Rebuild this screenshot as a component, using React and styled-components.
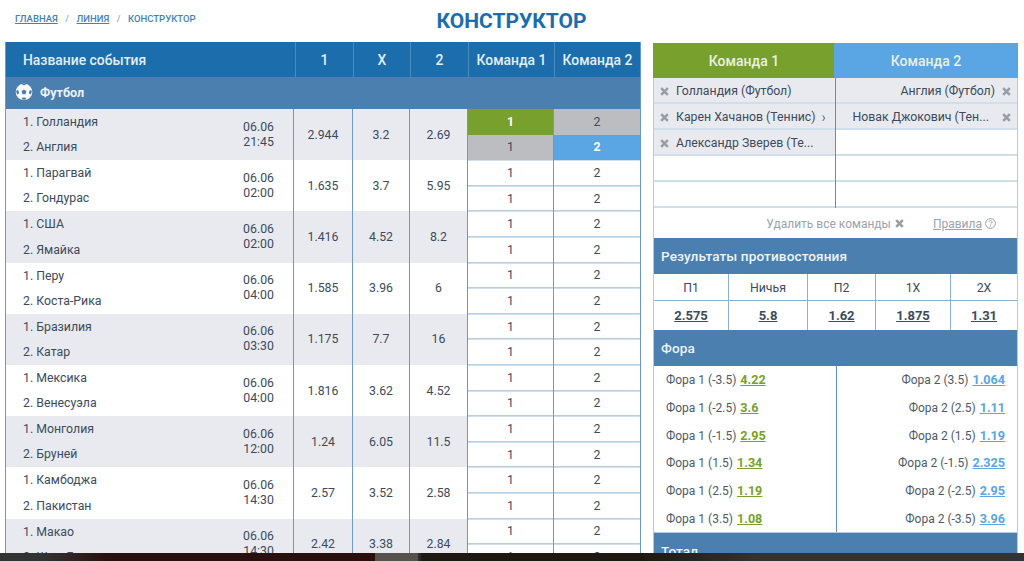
import React from "react";
import styled, { createGlobalStyle } from "styled-components";

const Global = createGlobalStyle`
  html, body { margin: 0; padding: 0; background: #fff; height: 100%; overflow: hidden; }
  body { font-family: Roboto, "Liberation Sans", sans-serif; color: #3c4a5c; font-size: 12.3px; }
  * { box-sizing: border-box; }
`;
const Page = styled.div`height: 561px; overflow: hidden; position: relative; padding: 0 6px 0 5px;`;
const Top = styled.header`height: 42px; position: relative; display: flex; justify-content: center;`;
const Crumbs = styled.nav`
  position: absolute; left: 10px; top: 13px; display: flex; gap: 7.5px;
  font-size: 9.5px; font-weight: 500; line-height: 12px;
`;
const Crumb = styled.span`text-decoration: ${p => (p.$link ? "underline" : "none")}; color: ${p => (p.$sep ? "#8aa8c4" : "#3f82b8")};`;
const Title = styled.h1`margin: 9px 0 0; font-size: 21px; line-height: 25px; font-weight: 700; color: #1b6dac;`;
const Columns = styled.div`display: flex; gap: 12px; align-items: flex-start;`;
const Table = styled.div`width: 636px; flex: none; border-left: 1px solid #6b9bc5; border-right: 1px solid #6b9bc5;`;
const HeadRow = styled.div`display: grid; grid-template-columns: 289px 58px 57px 58px 86px 1fr; height: 35px; background: #1b6dac; color: #e3edf5; font-weight: 500; font-size: 13.9px;`;
const HeadCell = styled.div`
  display: flex; align-items: center; justify-content: ${p => (p.$left ? "flex-start" : "center")};
  padding-left: ${p => (p.$left ? "17px" : "0")};
  border-left: ${p => (p.$left ? "0" : "1px solid #4a8abd")};
`;
const Sport = styled.div`height: 32px; background: #4a7fb0; color: #eef3f8; display: flex; align-items: center; gap: 7px; padding: 0 0 2px 9px; font-weight: 700; font-size: 12.5px;`;
const Row = styled.div`display: grid; grid-template-columns: 287px 59px 57px 58px 86px 1fr; height: 51.2px; background: ${p => (p.$alt ? "#e9eaf0" : "#fff")};`;
const NameCell = styled.div`display: flex; justify-content: space-between; align-items: center; padding: 0 19px 0 17px;`;
const Names = styled.div`display: flex; flex-direction: column; gap: 7.2px; line-height: 18px;`;
const Time = styled.div`text-align: center; line-height: 15px;`;
const Odd = styled.div`display: flex; align-items: center; justify-content: center; border-left: 1px solid #6b9bc5;`;
const Pick = styled.div`display: grid; grid-template-rows: 1fr 1fr; border-left: 1px solid #6b9bc5;`;
const PickBtn = styled.div`
  display: flex; align-items: center; justify-content: center;
  background: ${p => p.$bg || "#fff"}; color: ${p => (p.$on ? "#fff" : "#3c4a5c")};
  font-weight: ${p => (p.$on ? 700 : 400)};
  border-bottom: 1px solid ${p => (p.$bg ? "transparent" : "#b9d0e4")};
  border-top: 1px solid ${p => (p.$bg ? "transparent" : "#cfdfec")};
`;
const Side = styled.aside`width: 365px; flex: none; margin-top: 1px; border-left: 1px solid #b4cbe0; border-right: 1px solid #b4cbe0;`;
const TeamsHead = styled.div`display: grid; grid-template-columns: 181px 1fr; height: 35px; margin: 0 -1px;`;
const TeamHead = styled.div`display: flex; align-items: center; justify-content: center; background: ${p => p.$c}; color: #e8f0e4; font-weight: 500; font-size: 14px; ${p => (p.$right ? "" : "width: 182px;")}`;
const TeamGrid = styled.div`display: grid; grid-template-columns: 181px 1fr;`;
const TeamCol = styled.div`border-left: ${p => (p.$right ? "1px solid #5f90bb" : "0")};`;
const TeamRow = styled.div`
  height: 26px; display: flex; align-items: center; gap: 7px; padding: 2px 6px 0;
  background: ${p => (p.$on ? "#e9eaf0" : "#fff")};
  border-bottom: 2px solid #cfdfec;
  justify-content: ${p => (p.$right ? "flex-end" : "flex-start")};
  white-space: nowrap;
`;
const CrossIcon = styled.svg`flex: none; color: #989da6;`;
const Cross = () => (
  <CrossIcon width="9" height="9" viewBox="0 0 9 9">
    <path d="M1.200 1.200l6.600 6.600M7.800 1.200L1.200 7.800" stroke="currentColor" strokeWidth="2.600" />
  </CrossIcon>
);
const Gt = styled.span`color: #6a7583; font-size: 14px; line-height: 1; margin-left: -1px;`;
const Tools = styled.div`height: 30px; display: flex; justify-content: flex-end; align-items: center; padding: 1px 21px 0 0; color: #9aa2ad; font-size: 12px;`;
const Remove = styled.span`margin-right: 29px; display: flex; gap: 4px; align-items: center;`;
const Rules = styled.span`display: flex; align-items: center; gap: 3px;`;
const RulesText = styled.span`text-decoration: underline;`;
const Section = styled.div`height: 36px; background: #4a7fb0; color: #eef3f8; display: flex; align-items: center; padding-left: 7px; font-weight: 500; font-size: 13.6px; letter-spacing: .1px;`;
const Results = styled.div`display: grid; grid-template-columns: 74px 79px 68px 75px 1fr;`;
const ResCell = styled.div`
  height: ${p => (p.$v ? "29px" : "27px")}; display: flex; align-items: center; justify-content: center;
  padding-top: ${p => (p.$v ? "0" : "1px")};
  border-left: ${p => (p.$first ? "0" : "1px solid #8bb0d0")};
  border-bottom: ${p => (p.$v ? "0" : "1px solid #8bb0d0")};
  font-weight: ${p => (p.$v ? 700 : 400)}; text-decoration: ${p => (p.$v ? "underline" : "none")};
  font-size: ${p => (p.$v ? "13px" : "12.3px")};
`;
const Fora = styled.div`display: grid; grid-template-columns: 182px 1fr; height: 167px; border-bottom: 1px solid #b4cbe0;`;
const ForaCol = styled.div`
  display: flex; flex-direction: column; justify-content: space-between; padding: 5px 12px 4px;
  align-items: ${p => (p.$right ? "flex-end" : "flex-start")};
  border-left: ${p => (p.$right ? "1px solid #5f90bb" : "0")};
`;
const ForaItem = styled.div`height: 18px; line-height: 18px; display: flex; gap: 4px; font-size: 12px; color: #4d5a69;`;
const ForaVal = styled.span`color: ${p => p.$c}; font-weight: 700; text-decoration: underline; font-size: 12.6px;`;
const Dock = styled.div`position: absolute; left: 0; right: 0; bottom: 0; height: 8px;
  background: linear-gradient(90deg, #333 0, #333 40px, #2a0f0f 110px, #2a0f0f 375px, #57504d 375px, #57504d 418px, #2a2a2a 418px, #2a2a2a 421px, #1f1712 421px, #1f1712 640px, #333 760px, #333 100%);`;
const Ball = () => (
  <svg width="18" height="18" viewBox="0 0 18 18">
    <circle cx="9" cy="9" r="8.300" fill="#fff" />
    <path d="M9 6.500l2.500 1.800-1 2.900h-3l-1-2.900zM6.800 1.300L9 2.600l2.200-1.300c-1.400-.4-3-.4-4.400 0zM1.300 7.500l1.900-.6.900 3-1.300 1.800C1.500 10.700 1.100 9.100 1.300 7.500zM16.700 7.500l-1.900-.6-.9 3 1.300 1.800c1.300-1 1.700-2.600 1.500-4.200zM7 16.500l.3-2h3.400l.3 2c-1.300.4-2.700.4-4 0z" fill="#4a7fb0" />
  </svg>
);
const Help = () => (
  <svg width="11" height="11" viewBox="0 0 11 11" fill="none" stroke="#9aa2ad" strokeWidth="1">
    <circle cx="5.500" cy="5.500" r="4.900" />
    <path d="M3.900 4.200c.1-1 .9-1.500 1.700-1.500s1.500.6 1.500 1.400c0 1.200-1.600 1.200-1.600 2.500M5.500 7.600v.9" />
  </svg>
);

const rows = [
  ["Голландия", "Англия", "21:45", "2.944", "3.2", "2.69"],
  ["Парагвай", "Гондурас", "02:00", "1.635", "3.7", "5.95"],
  ["США", "Ямайка", "02:00", "1.416", "4.52", "8.2"],
  ["Перу", "Коста-Рика", "04:00", "1.585", "3.96", "6"],
  ["Бразилия", "Катар", "03:30", "1.175", "7.7", "16"],
  ["Мексика", "Венесуэла", "04:00", "1.816", "3.62", "4.52"],
  ["Монголия", "Бруней", "12:00", "1.24", "6.05", "11.5"],
  ["Камбоджа", "Пакистан", "14:30", "2.57", "3.52", "2.58"],
  ["Макао", "Шри-Ланка", "14:30", "2.42", "3.38", "2.84"],
];
const left = [["(-3.5)", "4.22"], ["(-2.5)", "3.6"], ["(-1.5)", "2.95"], ["(1.5)", "1.34"], ["(2.5)", "1.19"], ["(3.5)", "1.08"]];
const right = [["(3.5)", "1.064"], ["(2.5)", "1.11"], ["(1.5)", "1.19"], ["(-1.5)", "2.325"], ["(-2.5)", "2.95"], ["(-3.5)", "3.96"]];
const results = [["П1", "2.575"], ["Ничья", "5.8"], ["П2", "1.62"], ["1Х", "1.875"], ["2Х", "1.31"]];

export default function App() {
  return (
    <Page>
      <Global />
      <Top>
        <Crumbs>
          <Crumb $link>ГЛАВНАЯ</Crumb><Crumb $sep>/</Crumb><Crumb $link>ЛИНИЯ</Crumb><Crumb $sep>/</Crumb><Crumb>КОНСТРУКТОР</Crumb>
        </Crumbs>
        <Title>КОНСТРУКТОР</Title>
      </Top>
      <Columns>
        <Table>
          <HeadRow>
            <HeadCell $left>Название события</HeadCell>
            <HeadCell>1</HeadCell><HeadCell>Х</HeadCell><HeadCell>2</HeadCell>
            <HeadCell>Команда 1</HeadCell><HeadCell>Команда 2</HeadCell>
          </HeadRow>
          <Sport><Ball />Футбол</Sport>
          {rows.map((r, i) => (
            <Row key={r[0]} $alt={i % 2 === 0}>
              <NameCell>
                <Names><span>1. {r[0]}</span><span>2. {r[1]}</span></Names>
                <Time>06.06<br />{r[2]}</Time>
              </NameCell>
              <Odd>{r[3]}</Odd><Odd>{r[4]}</Odd><Odd>{r[5]}</Odd>
              <Pick>
                <PickBtn $on={i === 0} $bg={i === 0 ? "#78a02c" : undefined}>1</PickBtn>
                <PickBtn $bg={i === 0 ? "#bcbdc1" : undefined}>1</PickBtn>
              </Pick>
              <Pick>
                <PickBtn $bg={i === 0 ? "#bcbdc1" : undefined}>2</PickBtn>
                <PickBtn $on={i === 0} $bg={i === 0 ? "#5aa5e3" : undefined}>2</PickBtn>
              </Pick>
            </Row>
          ))}
        </Table>
        <Side>
          <TeamsHead>
            <TeamHead $c="#78a02c">Команда 1</TeamHead>
            <TeamHead $c="#5aa5e3" $right>Команда 2</TeamHead>
          </TeamsHead>
          <TeamGrid>
            <TeamCol>
              <TeamRow $on><Cross />Голландия (Футбол)</TeamRow>
              <TeamRow $on><Cross />Карен Хачанов (Теннис)<Gt>›</Gt></TeamRow>
              <TeamRow $on><Cross />Александр Зверев (Те...</TeamRow>
              <TeamRow /><TeamRow />
            </TeamCol>
            <TeamCol $right>
              <TeamRow $on $right>Англия (Футбол)<Cross /></TeamRow>
              <TeamRow $on $right>Новак Джокович (Тен...&nbsp;&nbsp;<Cross /></TeamRow>
              <TeamRow /><TeamRow /><TeamRow />
            </TeamCol>
          </TeamGrid>
          <Tools>
            <Remove>Удалить все команды <Cross /></Remove>
            <Rules><RulesText>Правила</RulesText><Help /></Rules>
          </Tools>
          <Section>Результаты противостояния</Section>
          <Results>
            {results.map((r, i) => <ResCell key={r[0]} $first={i === 0}>{r[0]}</ResCell>)}
            {results.map((r, i) => <ResCell key={r[1]} $v $first={i === 0}>{r[1]}</ResCell>)}
          </Results>
          <Section>Фора</Section>
          <Fora>
            <ForaCol>
              {left.map(f => <ForaItem key={f[0]}>Фора 1 {f[0]} <ForaVal $c="#78a02c">{f[1]}</ForaVal></ForaItem>)}
            </ForaCol>
            <ForaCol $right>
              {right.map(f => <ForaItem key={f[0]}>Фора 2 {f[0]} <ForaVal $c="#5aa5e3">{f[1]}</ForaVal></ForaItem>)}
            </ForaCol>
          </Fora>
          <Section>Тотал</Section>
        </Side>
      </Columns>
      <Dock />
    </Page>
  );
}
